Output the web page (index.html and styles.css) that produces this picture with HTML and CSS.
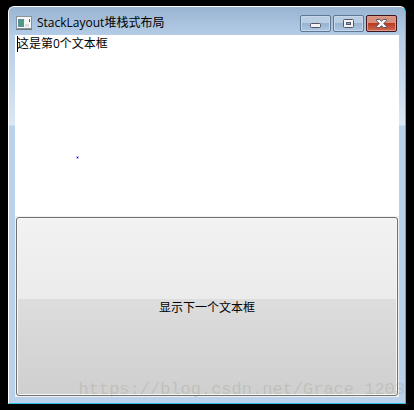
FILE: index.html
```
<!DOCTYPE html>
<html lang="zh-CN">
<head>
    <meta charset="UTF-8">
    <meta name="viewport" content="width=device-width, initial-scale=1.0">
    <title>StackLayout堆栈式布局</title>
    <link rel="stylesheet" href="styles.css">
</head>
<body>
    <div class="window">
        <header class="titlebar">
            <svg class="app-icon" width="16" height="14" viewBox="0 0 16 14">
                <rect x="0.5" y="0.5" width="15" height="12" fill="#f7f7f7" stroke="#8a9299"/>
                <path d="M0 13.5h16" stroke="#6f7780"/>
                <rect x="2" y="3" width="6" height="8" fill="#5c8db0"/>
                <rect x="3" y="4" width="4" height="6" fill="#4f9a78"/>
                <rect x="9" y="8" width="4" height="3" fill="#dcdfe2"/>
                <path d="M13.5 3v3" stroke="#4a6a78"/>
            </svg>
            <h1 class="title">StackLayout堆栈式布局</h1>
            <div class="controls">
                <button class="control" aria-label="最小化">
                    <svg width="11" height="11" viewBox="0 0 11 11">
                        <rect x="0.5" y="5.5" width="10" height="4" rx="1" fill="#f4f4f4" stroke="#535666"/>
                    </svg>
                </button>
                <button class="control" aria-label="最大化">
                    <svg width="11" height="11" viewBox="0 0 11 11">
                        <rect x="0.5" y="1.5" width="10" height="8" rx="1" fill="#f4f4f4" stroke="#535666"/>
                        <rect x="3.5" y="4.5" width="4" height="2" fill="#8fb0d4" stroke="#535666"/>
                    </svg>
                </button>
                <button class="control close" aria-label="关闭">
                    <svg width="11" height="11" viewBox="0 0 11 11">
                        <path d="M0.5 1.5h3.2l1.8 1.8 1.8-1.8h3.2v1.2l-2.8 2.8 2.8 2.8v1.2h-3.2l-1.8-1.8-1.8 1.8h-3.2v-1.2l2.8-2.8-2.8-2.8z" fill="#f8f8f8" stroke="#535666"/>
                    </svg>
                </button>
            </div>
        </header>
        <main class="client">
            <div class="editor">
                <textarea class="text" aria-label="文本框" spellcheck="false">这是第0个文本框</textarea>
                <span class="caret"></span>
                <span class="dot"></span>
            </div>
            <button class="next">显示下一个文本框</button>
        </main>
        <div class="watermark">https://blog.csdn.net/Grace_1203</div>
    </div>
</body>
</html>
```
FILE: styles.css
```
* {
    box-sizing: border-box;
}

body {
    margin: 0;
    height: 100vh;
    padding: 6px 8px;
    background-color: #000000;
    font-family: "Open Sans", "Noto Sans CJK SC", sans-serif;
    font-size: 12px;
    color: #000000;
}

.window {
    position: relative;
    display: flex;
    flex-direction: column;
    height: 100%;
    padding: 0 6px 6px;
    border: 1px solid #ffffff;
    border-right-color: #33bfe0;
    border-bottom-color: #33bfe0;
    border-radius: 6px 6px 0 0;
    background: linear-gradient(#99b4d1, #b4cce6 28px, #dbe7f5 118px, #b9d1ea 119px);
}

.titlebar {
    display: flex;
    align-items: center;
    height: 28px;
    padding: 4px 2px 0 1px;
}

.title {
    flex: 1;
    margin: 0 0 0 5px;
    font-size: 12px;
    font-weight: normal;
    line-height: 22px;
}

.controls {
    display: flex;
    gap: 2px;
}

.control {
    display: flex;
    align-items: center;
    justify-content: center;
    width: 31px;
    height: 17px;
    padding: 0;
    border: 1px solid #5f7894;
    border-radius: 2px;
    background: linear-gradient(#b9cde3 50%, #98b4d2 50%, #adc8e3);
    box-shadow: inset 0 0 0 1px #c6d8ea;
}

.close {
    border-color: #43141c;
    background: linear-gradient(#d9917f 50%, #b93a25 50%, #cf6a4e);
    box-shadow: inset 0 0 0 1px #dc9c8c;
}

.client {
    display: grid;
    grid-template-rows: 1fr 1fr;
    flex: 1;
    background-color: #f0f0f0;
}

.editor {
    position: relative;
    background-color: #ffffff;
}

.text {
    display: block;
    width: 100%;
    height: 100%;
    padding: 0 2px;
    border: none;
    outline: none;
    resize: none;
    background: transparent;
    font: inherit;
    line-height: 18px;
}

.caret {
    position: absolute;
    top: 1px;
    left: 2px;
    width: 1px;
    height: 16px;
    background-color: #000000;
}

.dot {
    position: absolute;
    top: 122px;
    left: 62px;
    width: 1px;
    height: 1px;
    background-color: #0000a8;
    box-shadow: 0 0 0 1px rgba(60, 60, 220, 0.3);
}

.next {
    margin: 1px;
    padding: 0;
    border: 1px solid #707070;
    border-radius: 3px;
    background: linear-gradient(#f2f2f2, #ebebeb 46%, #dddddd 46%, #cfcfcf);
    box-shadow: inset 0 0 0 1px #f8f8f8;
    font: inherit;
    color: inherit;
}

.watermark {
    position: absolute;
    right: 0;
    bottom: 2px;
    font-family: "Liberation Mono", monospace;
    font-size: 17px;
    line-height: 22px;
    color: rgba(150, 150, 130, 0.28);
    pointer-events: none;
}
```
